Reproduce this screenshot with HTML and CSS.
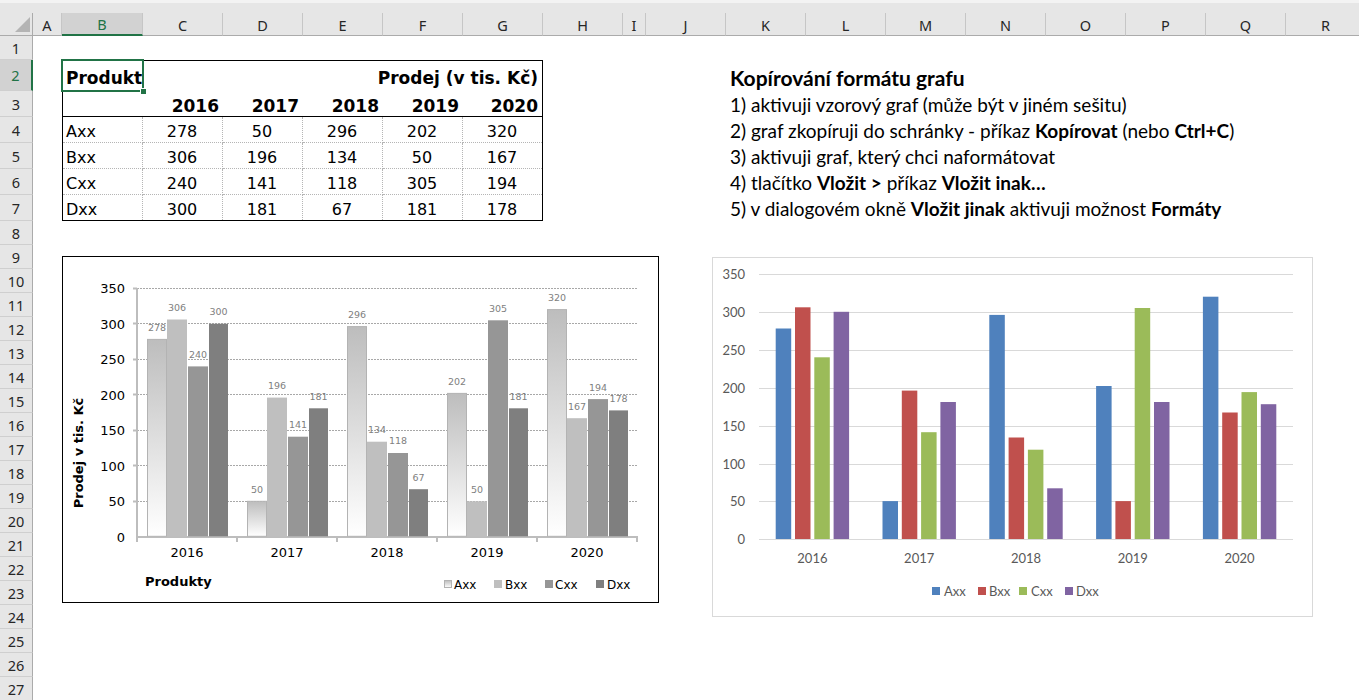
FILE: index.html
```html
<!DOCTYPE html>
<html lang="cs">
<head>
<meta charset="utf-8">
<title>Kopírování formátu grafu</title>
<link rel="stylesheet" href="styles.css">
</head>
<body>
<div class="topband"></div>
<div class="sheet">
  <div class="corner"><span class="tri"></span></div>
  <div class="ch">A</div><div class="ch sel">B</div><div class="ch">C</div><div class="ch">D</div><div class="ch">E</div><div class="ch">F</div><div class="ch">G</div><div class="ch">H</div><div class="ch">I</div><div class="ch">J</div><div class="ch">K</div><div class="ch">L</div><div class="ch">M</div><div class="ch">N</div><div class="ch">O</div><div class="ch">P</div><div class="ch">Q</div><div class="ch">R</div>

  <div class="rh">1</div><div class="rh sel">2</div><div class="rh">3</div><div class="rh">4</div><div class="rh">5</div><div class="rh">6</div><div class="rh">7</div><div class="rh">8</div><div class="rh">9</div><div class="rh">10</div><div class="rh">11</div><div class="rh">12</div><div class="rh">13</div><div class="rh">14</div><div class="rh">15</div><div class="rh">16</div><div class="rh">17</div><div class="rh">18</div><div class="rh">19</div><div class="rh">20</div><div class="rh">21</div><div class="rh">22</div><div class="rh">23</div><div class="rh">24</div><div class="rh">25</div><div class="rh">26</div><div class="rh">27</div>

  <div class="table">
    <div class="c r2 bold">Produkt</div>
    <div class="c r2"></div><div class="c r2"></div><div class="c r2"></div><div class="c r2"></div>
    <div class="c r2 bold right">Prodej (v tis. Kč)</div>

    <div class="c r3"></div>
    <div class="c r3 bold right">2016</div><div class="c r3 bold right">2017</div><div class="c r3 bold right">2018</div><div class="c r3 bold right">2019</div><div class="c r3 bold right">2020</div>

    <div class="c d vr">Axx</div><div class="c d vr num">278</div><div class="c d vr num">50</div><div class="c d vr num">296</div><div class="c d vr num">202</div><div class="c d num">320</div>
    <div class="c d vr">Bxx</div><div class="c d vr num">306</div><div class="c d vr num">196</div><div class="c d vr num">134</div><div class="c d vr num">50</div><div class="c d num">167</div>
    <div class="c d vr">Cxx</div><div class="c d vr num">240</div><div class="c d vr num">141</div><div class="c d vr num">118</div><div class="c d vr num">305</div><div class="c d num">194</div>
    <div class="c d last vr">Dxx</div><div class="c d last vr num">300</div><div class="c d last vr num">181</div><div class="c d last vr num">67</div><div class="c d last vr num">181</div><div class="c d last num">178</div>
  </div>
  <div class="selbox"></div>

  <div class="notes">
    <div class="nl title">Kopírování formátu grafu</div>
    <div class="nl">1) aktivuji vzorový graf (může být v jiném sešitu)</div>
    <div class="nl">2) graf zkopíruji do schránky - příkaz <b>Kopírovat</b> (nebo <b>Ctrl+C</b>)</div>
    <div class="nl">3) aktivuji graf, který chci naformátovat</div>
    <div class="nl">4) tlačítko <b>Vložit &gt;</b> příkaz <b>Vložit inak…</b></div>
    <div class="nl">5) v dialogovém okně <b>Vložit jinak</b> aktivuji možnost <b>Formáty</b></div>
  </div>

  <div class="chart chart1">
    <svg class="c1" width="595" height="345" viewBox="0 0 595 345">
      <defs>
        <linearGradient id="ga" x1="0" y1="0" x2="0" y2="1">
          <stop offset="0" stop-color="#bdbdbd"/>
          <stop offset="1" stop-color="#ffffff"/>
        </linearGradient>
      </defs>
      <g class="g1">
        <line x1="74" x2="574" y1="31.5" y2="31.5"/>
        <line x1="74" x2="574" y1="66.5" y2="66.5"/>
        <line x1="74" x2="574" y1="102.5" y2="102.5"/>
        <line x1="74" x2="574" y1="137.5" y2="137.5"/>
        <line x1="74" x2="574" y1="173.5" y2="173.5"/>
        <line x1="74" x2="574" y1="208.5" y2="208.5"/>
        <line x1="74" x2="574" y1="244.5" y2="244.5"/>
      </g>
      <g class="ax1">
        <line x1="74" x2="74" y1="31" y2="281"/>
        <line x1="70" x2="74" y1="31.5" y2="31.5"/>
        <line x1="70" x2="74" y1="66.5" y2="66.5"/>
        <line x1="70" x2="74" y1="102.5" y2="102.5"/>
        <line x1="70" x2="74" y1="137.5" y2="137.5"/>
        <line x1="70" x2="74" y1="173.5" y2="173.5"/>
        <line x1="70" x2="74" y1="208.5" y2="208.5"/>
        <line x1="70" x2="74" y1="244.5" y2="244.5"/>
        <line x1="73" x2="575" y1="280" y2="280"/>
        <line x1="74" x2="74" y1="280" y2="285"/>
        <line x1="174" x2="174" y1="280" y2="285"/>
        <line x1="274" x2="274" y1="280" y2="285"/>
        <line x1="374" x2="374" y1="280" y2="285"/>
        <line x1="474" x2="474" y1="280" y2="285"/>
        <line x1="574" x2="574" y1="280" y2="285"/>
      </g>
      <g class="bars1">
        <rect class="ba" x="84.5" y="82.4" width="19" height="196.9"/>
        <rect class="bb" x="104" y="62.5" width="20" height="216.8"/>
        <rect class="bc" x="125" y="109.4" width="20" height="169.9"/>
        <rect class="bd" x="146" y="66.8" width="19" height="212.5"/>

        <rect class="ba" x="184.5" y="244.3" width="19" height="35"/>
        <rect class="bb" x="204" y="140.6" width="20" height="138.7"/>
        <rect class="bc" x="225" y="179.7" width="20" height="99.6"/>
        <rect class="bd" x="246" y="151.3" width="19" height="128"/>

        <rect class="ba" x="284.5" y="69.6" width="19" height="209.7"/>
        <rect class="bb" x="304" y="184.7" width="20" height="94.6"/>
        <rect class="bc" x="325" y="196" width="20" height="83.3"/>
        <rect class="bd" x="346" y="232.2" width="19" height="47.1"/>

        <rect class="ba" x="384.5" y="136.4" width="19" height="142.9"/>
        <rect class="bb" x="404" y="244.3" width="20" height="35"/>
        <rect class="bc" x="425" y="63.3" width="20" height="216"/>
        <rect class="bd" x="446" y="151.3" width="19" height="128"/>

        <rect class="ba" x="484.5" y="52.6" width="19" height="226.7"/>
        <rect class="bb" x="504" y="161.2" width="20" height="118.1"/>
        <rect class="bc" x="525" y="142.1" width="20" height="137.2"/>
        <rect class="bd" x="546" y="153.4" width="19" height="125.9"/>
      </g>
      <g class="dl1">
        <text x="94" y="74">278</text><text x="114" y="54">306</text><text x="135" y="101">240</text><text x="155.5" y="58">300</text>
        <text x="194" y="236">50</text><text x="214" y="132">196</text><text x="235" y="171">141</text><text x="255.5" y="143">181</text>
        <text x="294" y="61">296</text><text x="314" y="176">134</text><text x="335" y="187">118</text><text x="355.5" y="224">67</text>
        <text x="394" y="128">202</text><text x="414" y="236">50</text><text x="435" y="55">305</text><text x="455.5" y="143">181</text>
        <text x="494" y="44">320</text><text x="514" y="153">167</text><text x="535" y="134">194</text><text x="555.5" y="145">178</text>
      </g>
      <g class="yl1">
        <text x="62" y="36">350</text>
        <text x="62" y="71.5">300</text>
        <text x="62" y="107">250</text>
        <text x="62" y="142.5">200</text>
        <text x="62" y="178">150</text>
        <text x="62" y="213.5">100</text>
        <text x="62" y="249">50</text>
        <text x="62" y="284.5">0</text>
      </g>
      <g class="xl1">
        <text x="124" y="300">2016</text>
        <text x="224" y="300">2017</text>
        <text x="324" y="300">2018</text>
        <text x="424" y="300">2019</text>
        <text x="524" y="300">2020</text>
      </g>
      <text class="ttl1" transform="translate(15 196) rotate(-90)">Prodej v tis. Kč</text>
      <text class="xt1" x="82" y="329">Produkty</text>
      <g class="lg1">
        <rect class="ba" x="381.5" y="323.5" width="7" height="7"/>
        <text x="391" y="331.5">Axx</text>
        <rect class="bb" x="431" y="323" width="8" height="8"/>
        <text x="442" y="331.5">Bxx</text>
        <rect class="bc" x="482" y="323" width="8" height="8"/>
        <text x="492" y="331.5">Cxx</text>
        <rect class="bd" x="533" y="323" width="8" height="8"/>
        <text x="544" y="331.5">Dxx</text>
      </g>
    </svg>
  </div>

  <div class="chart chart2">
    <svg class="c2" width="599" height="358" viewBox="0 0 599 358">
      <g class="g2">
        <line x1="46" x2="580" y1="16.5" y2="16.5"/>
        <line x1="46" x2="580" y1="54.5" y2="54.5"/>
        <line x1="46" x2="580" y1="92.5" y2="92.5"/>
        <line x1="46" x2="580" y1="130.5" y2="130.5"/>
        <line x1="46" x2="580" y1="168.5" y2="168.5"/>
        <line x1="46" x2="580" y1="206.5" y2="206.5"/>
        <line x1="46" x2="580" y1="243.5" y2="243.5"/>
        <line x1="46" x2="580" y1="281.5" y2="281.5"/>
      </g>
      <g class="bars2">
        <rect class="sa" x="62.7" y="70.5" width="15.5" height="210.5"/>
        <rect class="sb" x="82" y="49.3" width="15.5" height="231.7"/>
        <rect class="sc" x="101.3" y="99.3" width="15.5" height="181.7"/>
        <rect class="sd" x="120.6" y="53.8" width="15.5" height="227.2"/>

        <rect class="sa" x="169.5" y="243.1" width="15.5" height="37.9"/>
        <rect class="sb" x="188.8" y="132.6" width="15.5" height="148.4"/>
        <rect class="sc" x="208.1" y="174.2" width="15.5" height="106.8"/>
        <rect class="sd" x="227.4" y="144" width="15.5" height="137"/>

        <rect class="sa" x="276.3" y="56.9" width="15.5" height="224.1"/>
        <rect class="sb" x="295.6" y="179.5" width="15.5" height="101.5"/>
        <rect class="sc" x="314.9" y="191.7" width="15.5" height="89.3"/>
        <rect class="sd" x="334.2" y="230.3" width="15.5" height="50.7"/>

        <rect class="sa" x="383.1" y="128" width="15.5" height="153"/>
        <rect class="sb" x="402.4" y="243.1" width="15.5" height="37.9"/>
        <rect class="sc" x="421.7" y="50" width="15.5" height="231"/>
        <rect class="sd" x="441" y="144" width="15.5" height="137"/>

        <rect class="sa" x="489.9" y="38.7" width="15.5" height="242.3"/>
        <rect class="sb" x="509.2" y="154.5" width="15.5" height="126.5"/>
        <rect class="sc" x="528.5" y="134.1" width="15.5" height="146.9"/>
        <rect class="sd" x="547.8" y="146.2" width="15.5" height="134.8"/>
      </g>
      <g class="yl2">
        <text x="32" y="21">350</text>
        <text x="32" y="59">300</text>
        <text x="32" y="97">250</text>
        <text x="32" y="135">200</text>
        <text x="32" y="173">150</text>
        <text x="32" y="211">100</text>
        <text x="32" y="248">50</text>
        <text x="32" y="286">0</text>
      </g>
      <g class="xl2">
        <text x="99.4" y="305">2016</text>
        <text x="206.2" y="305">2017</text>
        <text x="313" y="305">2018</text>
        <text x="419.8" y="305">2019</text>
        <text x="526.6" y="305">2020</text>
      </g>
      <g class="lg2">
        <rect class="sa" x="219" y="329" width="8" height="8"/>
        <text x="231" y="337.5">Axx</text>
        <rect class="sb" x="265" y="329" width="8" height="8"/>
        <text x="276" y="337.5">Bxx</text>
        <rect class="sc" x="306" y="329" width="8" height="8"/>
        <text x="318" y="337.5">Cxx</text>
        <rect class="sd" x="352" y="329" width="8" height="8"/>
        <text x="363" y="337.5">Dxx</text>
      </g>
    </svg>
  </div>
</div>
</body>
</html>
```

FILE: styles.css
```css
html, body {
  margin: 0;
  padding: 0;
  background: #ffffff;
}
body {
  width: 1359px;
  height: 700px;
  overflow: hidden;
  font-family: "DejaVu Sans", sans-serif;
}

.topband {
  height: 13px;
  background: #e6e6e6;
  border-top: 3px solid #f3f3f3;
  box-sizing: border-box;
}

.sheet {
  position: relative;
  display: grid;
  grid-template-columns: 33px 29px 81px repeat(6, 80px) 23px repeat(8, 80px) 80px;
  grid-template-rows: 23px 24px 31px repeat(5, 26px) repeat(20, 24px);
}

/* headers */
.corner {
  grid-row: 1;
  grid-column: 1;
  background: #e6e6e6;
  border-right: 1px solid #ababab;
  border-bottom: 1px solid #ababab;
  position: relative;
}
.corner .tri {
  position: absolute;
  right: 2px;
  bottom: 3px;
  width: 15px;
  height: 15px;
  background: #b4b4b4;
  clip-path: polygon(100% 0, 100% 100%, 0 100%);
}
.ch {
  grid-row: 1;
  background: #e6e6e6;
  border-right: 1px solid #c6c6c6;
  border-bottom: 1px solid #ababab;
  display: flex;
  align-items: center;
  justify-content: center;
  font-family: "Noto Sans", sans-serif;
  font-size: 14.5px;
  color: #262626;
  padding-top: 1px;
}
.ch.sel {
  background: #d2d2d2;
  color: #217346;
  border-bottom: 2px solid #217346;
}
.rh {
  grid-column: 1;
  background: #e6e6e6;
  border-right: 1px solid #ababab;
  border-bottom: 1px solid #cfcfcf;
  display: flex;
  align-items: center;
  justify-content: center;
  font-family: "Noto Sans", sans-serif;
  font-size: 14.5px;
  color: #262626;
}
.rh.sel {
  background: #d2d2d2;
  color: #217346;
  border-right: 2px solid #217346;
}

/* data table */
.table {
  grid-column: 3 / 9;
  grid-row: 3 / 9;
  align-self: start;
  height: 161px;
  box-sizing: border-box;
  border: 1px solid #000;
  display: grid;
  grid-template-columns: 80px 80px 80px 80px 80px 79px;
  grid-template-rows: 30px 26px 26px 26px 26px 25px;
  font-size: 16px;
  line-height: 18px;
  color: #000;
}
.c {
  display: flex;
  align-items: flex-end;
  padding: 0 4px 1px 3px;
  white-space: nowrap;
  box-sizing: border-box;
}
.c.r2 { padding-bottom: 4px; }
.c.r3 { border-bottom: 1px solid #000; }
.c.d { border-bottom: 1px dotted #b5b5b5; }
.c.d.last { border-bottom: none; }
.c.vr { border-right: 1px dotted #b5b5b5; }
.bold { font-weight: bold; font-size: 17px; }
.right { justify-content: flex-end; padding-right: 4px; }
.num { justify-content: center; }

.selbox {
  grid-column: 3;
  grid-row: 3;
  margin: -1px;
  border: 2px solid #217346;
  position: relative;
  z-index: 3;
}
.selbox::after {
  content: "";
  position: absolute;
  right: -4px;
  bottom: -4px;
  width: 5px;
  height: 5px;
  background: #217346;
  border-left: 1px solid #fff;
  border-top: 1px solid #fff;
}

/* instructions */
.notes {
  grid-column: 12 / 19;
  grid-row: 3 / 9;
  display: grid;
  grid-template-rows: 31px repeat(5, 26px);
  font-family: "Lato", sans-serif;
  font-size: 19px;
  color: #000;
}
.nl {
  display: flex;
  align-items: flex-end;
  padding: 0 0 2px 4px;
  white-space: pre;
  line-height: 21px;
}
.nl b { font-weight: bold; white-space: pre; }
.nl.title {
  font-weight: bold;
  font-size: 21px;
  padding-bottom: 3px;
}

/* charts (floating objects on the sheet) */
.chart {
  position: absolute;
  box-sizing: border-box;
  background: #fff;
}
.chart svg { display: block; }
.chart1 {
  left: 62px;
  top: 243px;
  width: 597px;
  height: 347px;
  border: 1px solid #000;
}
.chart2 {
  left: 712px;
  top: 244px;
  width: 601px;
  height: 360px;
  border: 1px solid #d9d9d9;
}

.c1 text { font-family: "DejaVu Sans", sans-serif; }
.g1 line { stroke: #a8a8a8; stroke-width: 1; stroke-dasharray: 2 1; }
.ax1 line { stroke: #bdbdbd; stroke-width: 2; }
.ba { fill: url(#ga); stroke: #b3b3b3; stroke-width: 1; }
.bb { fill: #bfbfbf; }
.bc { fill: #969696; }
.bd { fill: #7f7f7f; }
.dl1 text { font-size: 9.5px; fill: #808080; text-anchor: middle; }
.yl1 text { font-size: 13px; fill: #000; text-anchor: end; }
.xl1 text { font-size: 13px; fill: #000; text-anchor: middle; }
.ttl1 { font-size: 13px; font-weight: bold; fill: #000; text-anchor: middle; dominant-baseline: central; }
.xt1 { font-size: 13px; font-weight: bold; fill: #000; }
.lg1 text { font-size: 12px; fill: #000; }

.c2 text { font-family: "Lato", sans-serif; fill: #595959; }
.g2 line { stroke: #d9d9d9; stroke-width: 1; }
.sa { fill: #4f81bd; }
.sb { fill: #c0504d; }
.sc { fill: #9bbb59; }
.sd { fill: #8064a2; }
.yl2 text { font-size: 13px; text-anchor: end; }
.xl2 text { font-size: 13px; text-anchor: middle; }
.lg2 text { font-size: 13px; }
```
